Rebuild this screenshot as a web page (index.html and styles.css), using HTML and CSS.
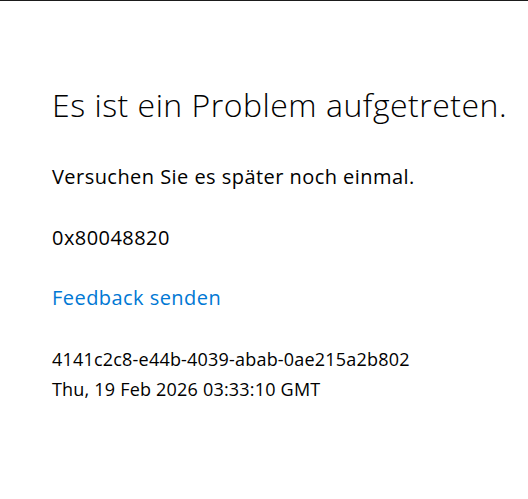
FILE: index.html
```html
<!DOCTYPE html>
<html lang="de">
<head>
<meta charset="utf-8">
<title>Fehler</title>
<link rel="stylesheet" href="styles.css">
</head>
<body>
<main class="page">
  <h1 class="title">Es ist ein Problem aufgetreten.</h1>
  <p class="message">Versuchen Sie es später noch einmal.</p>
  <p class="code">0x80048820</p>
  <p class="feedback"><a class="feedback-link" href="#">Feedback senden</a></p>
  <div class="details">
    <div class="detail-line">4141c2c8-e44b-4039-abab-0ae215a2b802</div>
    <div class="detail-line">Thu, 19 Feb 2026 03:33:10 GMT</div>
  </div>
</main>
</body>
</html>
```

FILE: styles.css
```css
html, body {
  margin: 0;
  padding: 0;
  background: #ffffff;
}

body {
  border-top: 1px solid #1b1b1b;
  font-family: "Open Sans", "Noto Sans", sans-serif;
  color: #000000;
}

.page {
  padding: 84px 0 0 52px;
}

.title {
  margin: 0;
  font-size: 32px;
  font-weight: 300;
  line-height: 40px;
  letter-spacing: 0.5px;
}

.message,
.code,
.feedback {
  margin: 0;
  font-size: 20px;
  line-height: 28px;
  letter-spacing: 0.45px;
}

.message {
  margin-top: 38px;
}

.code {
  margin-top: 33px;
}

.feedback {
  margin-top: 32px;
}

.feedback-link {
  color: #0078d4;
  text-decoration: none;
}

.details {
  margin-top: 32px;
}

.detail-line {
  font-size: 18px;
  line-height: 30px;
  letter-spacing: 0.2px;
}
```
